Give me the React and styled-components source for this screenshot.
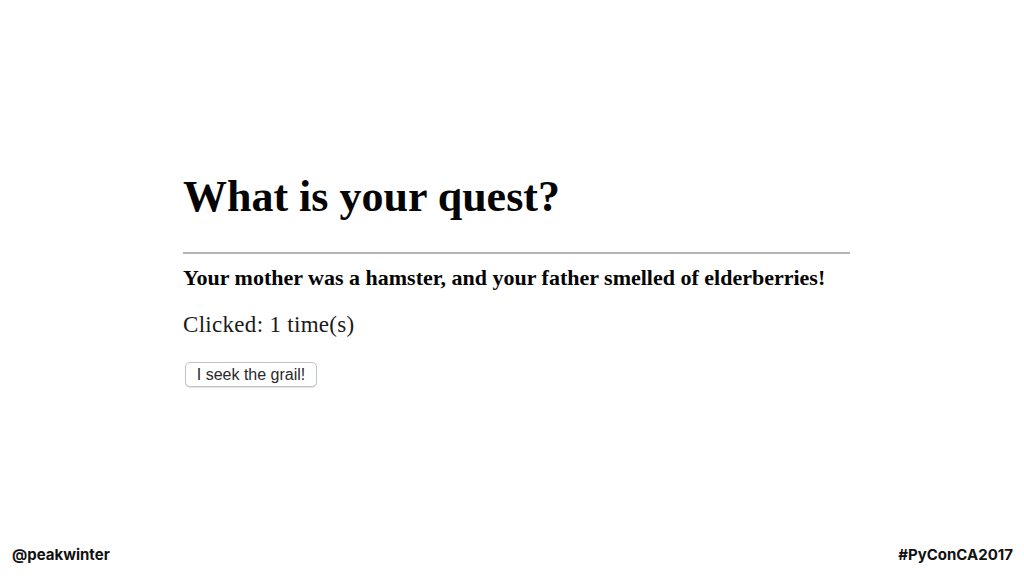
import React, { useState } from 'react';
import styled, { createGlobalStyle } from 'styled-components';

const GlobalStyle = createGlobalStyle`
    html, body {
        margin: 0;
        padding: 0;
        background: #ffffff;
    }
    #root {
        height: 576px;
    }
`;

const Slide = styled.div`
    width: 1024px;
    height: 576px;
    display: flex;
    flex-direction: column;
    box-sizing: border-box;
    overflow: hidden;
`;

const Stage = styled.div`
    flex: 1;
    padding: 169px 0 0 183px;
`;

const Shot = styled.div`
    width: 667px;
    font-family: "Liberation Serif", "Times New Roman", serif;
    color: #050505;
`;

const Title = styled.h1`
    margin: 0;
    font-size: 44px;
    line-height: 56px;
    font-weight: bold;
`;

const Rule = styled.hr`
    margin: 27px 0 0;
    border: none;
    height: 2px;
    background: #b4b4b4;
`;

const Insult = styled.h3`
    margin: 10px 0 0;
    font-size: 22px;
    line-height: 28px;
    font-weight: bold;
`;

const Counter = styled.p`
    margin: 19px 0 0;
    font-size: 23px;
    line-height: 28px;
    letter-spacing: 0.3px;
    color: #1a1a1a;
`;

const GrailButton = styled.button`
    display: block;
    margin: 23px 0 0 2px;
    width: 132px;
    height: 25px;
    padding: 0;
    font-family: "Liberation Sans", Arial, sans-serif;
    font-size: 16px;
    color: #2a2a2a;
    background: #fff;
    border: 1px solid #c4c4c4;
    border-radius: 5px;
    box-shadow: 0 1px 1px rgba(0, 0, 0, 0.12);
    cursor: pointer;
`;

const Footer = styled.div`
    display: flex;
    justify-content: space-between;
    align-items: center;
    padding: 0 11px 12px 12px;
    font-family: "Inter", "Liberation Sans", sans-serif;
    font-weight: 700;
    font-size: 15px;
    color: #111;
`;

export default function App() {
    const [clicks, setClicks] = useState(1);

    return (
        <Slide>
            <GlobalStyle />
            <Stage>
                <Shot>
                    <Title>What is your quest?</Title>
                    <Rule />
                    <Insult>Your mother was a hamster, and your father smelled of elderberries!</Insult>
                    <Counter>Clicked: {clicks} time(s)</Counter>
                    <GrailButton onClick={() => setClicks(clicks + 1)}>I seek the grail!</GrailButton>
                </Shot>
            </Stage>
            <Footer>
                <span>@peakwinter</span>
                <span>#PyConCA2017</span>
            </Footer>
        </Slide>
    );
}
